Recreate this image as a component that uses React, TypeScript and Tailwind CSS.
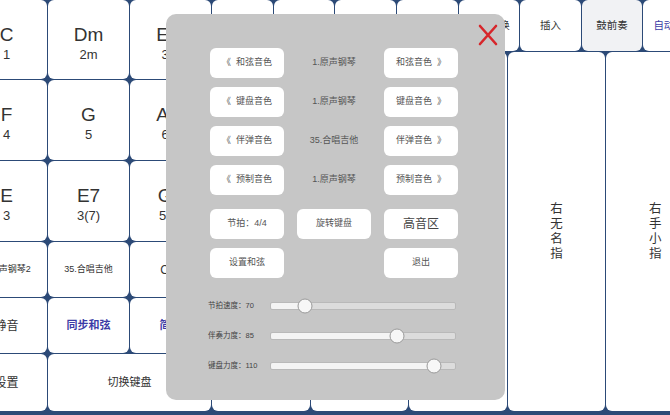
import * as React from "react";

const FONT = "font-['Liberation_Sans','Noto_Sans_CJK_SC',sans-serif]";

type Chord = { name: string; num: string };

const chords: Chord[] = [
  { name: "C", num: "1" },
  { name: "Dm", num: "2m" },
  { name: "Em", num: "3m" },
  { name: "F", num: "4" },
  { name: "G", num: "5" },
  { name: "Am", num: "6m" },
  { name: "E", num: "3" },
  { name: "E7", num: "3(7)" },
  { name: "G7", num: "5(7)" },
];

const topStrip = ["", "", "", "", "变奏切换", "插入", "鼓前奏", "自动伴奏"];
const fingers = ["右拇指", "右食指", "右中指", "右无名指", "右手小指"];

const voiceRows = [
  { label: "和弦音色", value: "1.原声钢琴" },
  { label: "键盘音色", value: "1.原声钢琴" },
  { label: "伴弹音色", value: "35.合唱吉他" },
  { label: "预制音色", value: "1.原声钢琴" },
];

const sliders = [
  { label: "节拍速度：70", pos: 16 },
  { label: "伴奏力度：85", pos: 70 },
  { label: "键盘力度：110", pos: 92 },
];

type CellProps = {
  className?: string;
  bg?: string;
  color?: string;
  children?: React.ReactNode;
};

function Cell({ className, bg = "bg-white", color = "text-[#333]", children }: CellProps) {
  return (
    <div className={`flex items-center justify-center rounded-[6px] ${bg} ${color} ${className ?? ""}`}>
      {children}
    </div>
  );
}

function PanelButton({ children, className }: { children: React.ReactNode; className?: string }) {
  return (
    <div className={`flex h-[30px] items-center justify-center rounded-[6px] bg-white ${className ?? "text-[9px] text-[#555]"}`}>
      {children}
    </div>
  );
}

function Slider({ label, pos }: { label: string; pos: number }) {
  return (
    <div className="flex h-[30px] items-center">
      <div className="w-[62px] whitespace-nowrap text-[7.5px] text-[#444]">{label}</div>
      <div className="relative h-[8px] w-[186px] rounded-[2px] border border-[#b9b9b9] bg-[#dcdcdc]">
        <div className="absolute inset-y-0 left-0 rounded-[2px] bg-[#f4f4f4]" style={{ width: `${pos}%` }} />
        <div
          className="absolute top-1/2 h-[15px] w-[15px] -translate-x-1/2 -translate-y-1/2 rounded-full border border-[#9a9a9a] bg-[#f7f7f7]"
          style={{ left: `calc(7px + (100% - 14px) * ${pos / 100})` }}
        />
      </div>
    </div>
  );
}

export default function App() {
  return (
    <div className={`relative h-[415px] w-[670px] overflow-hidden bg-[#2c4a77] ${FONT}`}>
      <div className="-ml-[34px] flex h-[411px] w-[738px] gap-[1px]">
        {/* chord grid */}
        <div className="grid w-[245px] shrink-0 grid-cols-[81px_81px_81px] grid-rows-[79px_80px_80px_55px_55px_57px] gap-[1px]">
          {chords.map((c) => (
            <Cell key={c.name} className="flex-col gap-[4px] pt-[6px]">
              <span className="text-[19px] leading-none">{c.name}</span>
              <span className="text-[13px] leading-none">{c.num}</span>
            </Cell>
          ))}
          <Cell className="whitespace-nowrap text-[9px]">1.原声钢琴2</Cell>
          <Cell className="whitespace-nowrap text-[9px]">35.合唱吉他</Cell>
          <Cell className="whitespace-nowrap text-[12px]">C调</Cell>
          <Cell className="text-[12px]">静音</Cell>
          <Cell color="text-[#3b3ba6]" className="text-[11px] font-semibold">
            同步和弦
          </Cell>
          <Cell color="text-[#3b3ba6]" className="text-[11px] font-semibold">
            简谱
          </Cell>
          <Cell className="text-[12px]">设置</Cell>
          <Cell className="col-span-2 text-[11px]">切换键盘</Cell>
        </div>

        {/* right side */}
        <div className="flex w-[492px] shrink-0 flex-col gap-[1px]">
          <div className="grid h-[51px] grid-cols-8 gap-[1px]">
            {topStrip.map((t, i) => (
              <Cell
                key={i}
                bg={i === 6 ? "bg-[#f1f2f4]" : "bg-white"}
                color={i === 7 ? "text-[#3b3ba6]" : "text-[#333]"}
                className={`whitespace-nowrap text-[10.5px] ${i === 7 ? "justify-start pl-[10px]" : ""}`}
              >
                {t}
              </Cell>
            ))}
          </div>
          <div className="grid flex-1 grid-cols-5 gap-[1px]">
            {fingers.map((f) => (
              <Cell key={f} className="flex-col text-[12.5px] leading-[15px]">
                {f.split("").map((ch, i) => (
                  <span key={i}>{ch}</span>
                ))}
              </Cell>
            ))}
          </div>
        </div>
      </div>

      {/* settings panel */}
      <div className="absolute left-[166px] top-[14px] h-[386px] w-[339px] rounded-[10px] bg-[#c6c6c6] pl-[44px] pt-[34px]">
        <svg className="absolute right-[7px] top-[10px]" width="20" height="22" viewBox="0 0 20 22">
          <path d="M2 2 L18 20 M18 2 L2 20" stroke="#d7262b" strokeWidth="2.6" strokeLinecap="round" fill="none" />
        </svg>

        <div className="grid grid-cols-[74px_74px_74px] gap-x-[13px] gap-y-[9px]">
          {voiceRows.map((r) => (
            <React.Fragment key={r.label}>
              <PanelButton>
                <span className="mr-[5px]">《</span>
                {r.label}
              </PanelButton>
              <div className="flex h-[30px] items-center justify-center whitespace-nowrap text-[9px] text-[#555]">
                {r.value}
              </div>
              <PanelButton>
                {r.label}
                <span className="ml-[5px]">》</span>
              </PanelButton>
            </React.Fragment>
          ))}
        </div>

        <div className="mt-[14px] grid grid-cols-[74px_74px_74px] gap-x-[13px] gap-y-[9px]">
          <PanelButton>节拍：4/4</PanelButton>
          <PanelButton>旋转键盘</PanelButton>
          <PanelButton className="text-[12px] text-[#444]">高音区</PanelButton>
          <PanelButton>设置和弦</PanelButton>
          <div />
          <PanelButton>退出</PanelButton>
        </div>

        <div className="-ml-[2px] mt-[13px]">
          {sliders.map((s) => (
            <Slider key={s.label} label={s.label} pos={s.pos} />
          ))}
        </div>
      </div>
    </div>
  );
}
